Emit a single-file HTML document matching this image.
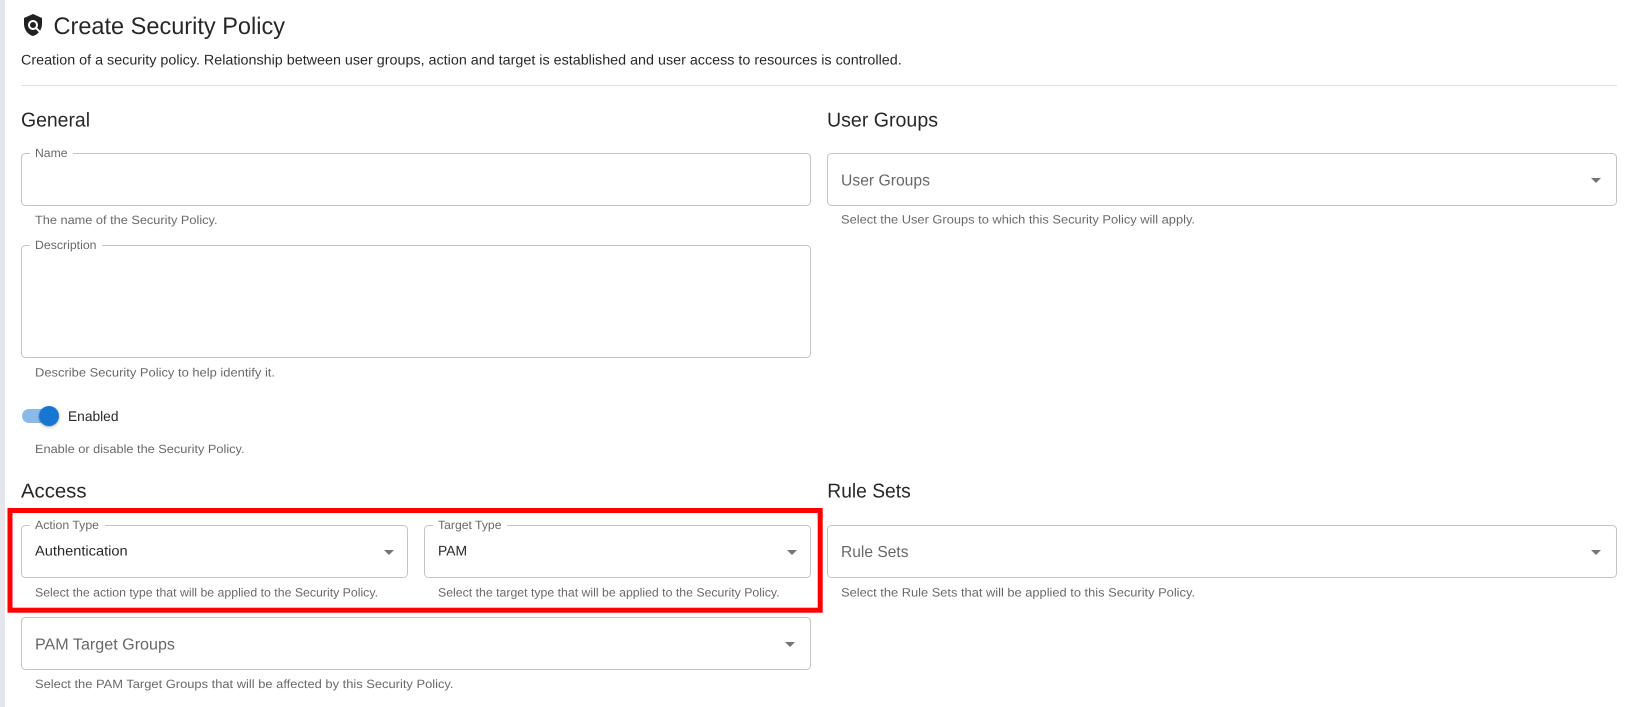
<!DOCTYPE html>
<html lang="en"><head><meta charset="utf-8"><title>Create Security Policy</title>
<style>
html,body{margin:0;padding:0;background:#fff;width:1631px;height:707px;overflow:hidden}
svg{display:block;position:absolute;left:0;top:0}
text{font-family:"Liberation Sans",Arial,sans-serif;text-rendering:geometricPrecision}
.t{fill:rgba(0,0,0,.85)}
.s{fill:rgba(0,0,0,.6);font-size:12px}
.p{fill:rgba(0,0,0,.6);font-size:16px}
.v{fill:rgba(0,0,0,.85);font-size:14px}
.h{fill:rgba(0,0,0,.85);font-size:20px}
.b{fill:#fff;stroke:#c4c4c4;stroke-width:1}
.a{fill:#757575}
</style></head><body>
<svg width="1631" height="707" viewBox="0 0 1631 707" xmlns="http://www.w3.org/2000/svg">
<defs><filter id="sh" x="-50%" y="-50%" width="200%" height="200%"><feDropShadow dx="0" dy="1" stdDeviation="1.2" flood-color="#000" flood-opacity=".35"/></filter></defs>
<rect x="0" y="0" width="5" height="707" fill="#e4e6ec"/>

<g transform="translate(21,13)" fill="rgba(0,0,0,.87)">
<path d="M21 5l-9-4-9 4v6c0 5.55 3.84 10.74 9 12 2.3-.56 4.33-1.9 5.88-3.71l-3.12-3.12c-1.94 1.29-4.58 1.07-6.29-.64-1.95-1.95-1.95-5.12 0-7.07 1.95-1.95 5.12-1.95 7.07 0 1.71 1.71 1.92 4.35.64 6.29l2.9 2.9C20.29 15.69 21 13.38 21 11V5z"/>
<circle cx="12" cy="12" r="3"/>
</g>
<text class="t" x="53.5" y="34" font-size="24" textLength="231.5" lengthAdjust="spacingAndGlyphs">Create Security Policy</text>
<text class="v" x="21" y="64.5" textLength="880.7" lengthAdjust="spacingAndGlyphs">Creation of a security policy. Relationship between user groups, action and target is established and user access to resources is controlled.</text>
<rect x="21" y="85" width="1596" height="1" fill="#e0e0e0"/>

<text class="h" x="21" y="126.3" textLength="69" lengthAdjust="spacingAndGlyphs">General</text>
<text class="h" x="827" y="126.3" textLength="111" lengthAdjust="spacingAndGlyphs">User Groups</text>

<rect class="b" x="21.5" y="153.5" width="789" height="52" rx="4"/>
<rect x="30" y="152" width="43" height="3" fill="#fff"/>
<text class="s" x="35" y="157" textLength="32.5" lengthAdjust="spacingAndGlyphs">Name</text>
<text class="s" x="35" y="224" textLength="182.5" lengthAdjust="spacingAndGlyphs">The name of the Security Policy.</text>

<rect class="b" x="21.5" y="245.5" width="789" height="112" rx="4"/>
<rect x="30" y="244" width="72" height="3" fill="#fff"/>
<text class="s" x="35" y="249" textLength="61.5" lengthAdjust="spacingAndGlyphs">Description</text>
<text class="s" x="35" y="376.3" textLength="240" lengthAdjust="spacingAndGlyphs">Describe Security Policy to help identify it.</text>

<rect x="22" y="409" width="36" height="14" rx="7" fill="#1976d2" fill-opacity=".5"/>
<circle cx="49" cy="416" r="10" fill="#1976d2" filter="url(#sh)"/>
<text class="v" x="68" y="421" textLength="50.5" lengthAdjust="spacingAndGlyphs">Enabled</text>
<text class="s" x="35" y="453" textLength="209.5" lengthAdjust="spacingAndGlyphs">Enable or disable the Security Policy.</text>

<text class="h" x="21" y="497.5" textLength="65.5" lengthAdjust="spacingAndGlyphs">Access</text>
<text class="h" x="827.3" y="497.5" textLength="83.4" lengthAdjust="spacingAndGlyphs">Rule Sets</text>

<rect x="10" y="510.5" width="810.2" height="99.7" fill="none" stroke="#ff0000" stroke-width="5"/>

<rect class="b" x="21.5" y="525.5" width="386" height="52" rx="4"/>
<rect x="30" y="524" width="75" height="3" fill="#fff"/>
<text class="s" x="35" y="529" textLength="64" lengthAdjust="spacingAndGlyphs">Action Type</text>
<text class="v" x="35" y="555.7" textLength="92.7" lengthAdjust="spacingAndGlyphs">Authentication</text>
<path class="a" d="M384 550h10l-5 5z"/>
<text class="s" x="35" y="596.3" textLength="343" lengthAdjust="spacingAndGlyphs">Select the action type that will be applied to the Security Policy.</text>

<rect class="b" x="424.5" y="525.5" width="386" height="52" rx="4"/>
<rect x="433" y="524" width="74" height="3" fill="#fff"/>
<text class="s" x="438" y="529" textLength="63.5" lengthAdjust="spacingAndGlyphs">Target Type</text>
<text class="v" x="438" y="555.7" textLength="29" lengthAdjust="spacingAndGlyphs">PAM</text>
<path class="a" d="M787 550h10l-5 5z"/>
<text class="s" x="438" y="596.3" textLength="341.5" lengthAdjust="spacingAndGlyphs">Select the target type that will be applied to the Security Policy.</text>

<rect class="b" x="21.5" y="617.5" width="789" height="52" rx="4"/>
<text class="p" x="35" y="649.5" textLength="140" lengthAdjust="spacingAndGlyphs">PAM Target Groups</text>
<path class="a" d="M785 642h10l-5 5z"/>
<text class="s" x="35" y="688" textLength="418.5" lengthAdjust="spacingAndGlyphs">Select the PAM Target Groups that will be affected by this Security Policy.</text>

<rect class="b" x="827.5" y="153.5" width="789" height="52" rx="4"/>
<text class="p" x="841" y="185.3" textLength="89" lengthAdjust="spacingAndGlyphs">User Groups</text>
<path class="a" d="M1591 178h10l-5 5z"/>
<text class="s" x="841" y="223.7" textLength="354" lengthAdjust="spacingAndGlyphs">Select the User Groups to which this Security Policy will apply.</text>

<rect class="b" x="827.5" y="525.5" width="789" height="52" rx="4"/>
<text class="p" x="841" y="557.2" textLength="67.5" lengthAdjust="spacingAndGlyphs">Rule Sets</text>
<path class="a" d="M1591 550h10l-5 5z"/>
<text class="s" x="841" y="596.3" textLength="354" lengthAdjust="spacingAndGlyphs">Select the Rule Sets that will be applied to this Security Policy.</text>
</svg>
</body></html>
